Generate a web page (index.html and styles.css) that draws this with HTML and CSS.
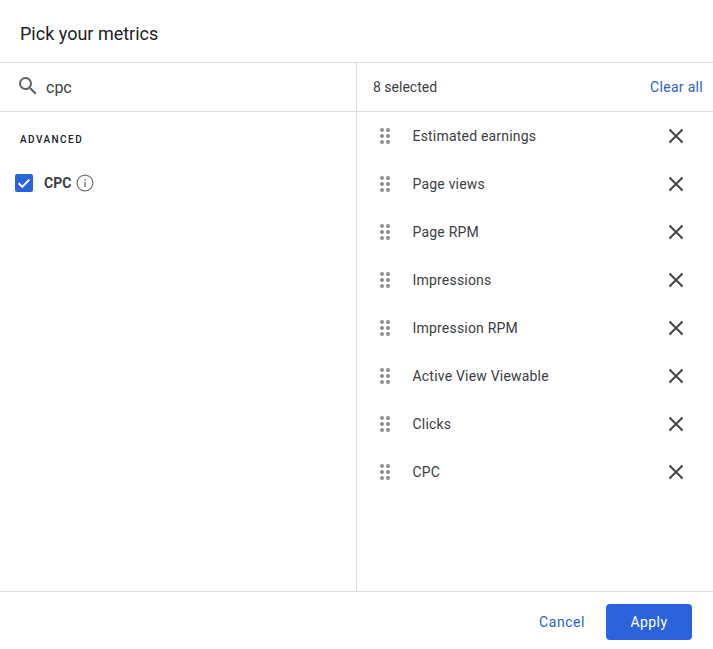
FILE: index.html
```
<!DOCTYPE html>
<html lang="en">
<head>
<meta charset="utf-8">
<title>Pick your metrics</title>
<link rel="stylesheet" href="styles.css">
</head>
<body>
<div class="dialog">
  <header class="title">Pick your metrics</header>
  <div class="columns">
    <section class="left">
      <div class="search">
        <svg class="search-icon" width="24" height="24" viewBox="0 0 24 24"><path fill="#5f6368" d="M15.5 14h-.79l-.28-.27A6.47 6.47 0 0 0 16 9.5 6.5 6.5 0 1 0 9.5 16c1.61 0 3.09-.59 4.23-1.57l.27.28v.79l5 4.99L20.49 19l-4.99-5zm-6 0C7.01 14 5 11.99 5 9.5S7.01 5 9.5 5 14 7.01 14 9.5 11.99 14 9.5 14z"/></svg>
        <span class="query">cpc</span>
      </div>
      <div class="group">ADVANCED</div>
      <div class="option">
        <svg class="check" width="18" height="18" viewBox="0 0 18 18"><rect width="18" height="18" rx="2" fill="#2b63dc"/><path d="M3.6 9.2l3.7 3.6 7-7.2" fill="none" stroke="#fff" stroke-width="1.9"/></svg>
        <span class="option-label">CPC</span>
        <svg class="info" width="18" height="18" viewBox="0 0 18 18"><circle cx="9" cy="9" r="7.9" fill="none" stroke="#757575" stroke-width="1.3"/><rect x="8.3" y="8" width="1.4" height="5" fill="#757575"/><rect x="8.3" y="5" width="1.4" height="1.6" fill="#757575"/></svg>
      </div>
    </section>
    <section class="right">
      <div class="summary"><span class="count">8 selected</span><span class="clear">Clear all</span></div>
      <ul class="list">
        <li class="row"><svg class="grip" width="10" height="16" viewBox="0 0 10 16"><use href="#dots"/></svg><span class="name">Estimated earnings</span><svg class="x" width="16" height="16" viewBox="0 0 16 16"><use href="#cross"/></svg></li>
        <li class="row"><svg class="grip" width="10" height="16" viewBox="0 0 10 16"><use href="#dots"/></svg><span class="name">Page views</span><svg class="x" width="16" height="16" viewBox="0 0 16 16"><use href="#cross"/></svg></li>
        <li class="row"><svg class="grip" width="10" height="16" viewBox="0 0 10 16"><use href="#dots"/></svg><span class="name">Page RPM</span><svg class="x" width="16" height="16" viewBox="0 0 16 16"><use href="#cross"/></svg></li>
        <li class="row"><svg class="grip" width="10" height="16" viewBox="0 0 10 16"><use href="#dots"/></svg><span class="name">Impressions</span><svg class="x" width="16" height="16" viewBox="0 0 16 16"><use href="#cross"/></svg></li>
        <li class="row"><svg class="grip" width="10" height="16" viewBox="0 0 10 16"><use href="#dots"/></svg><span class="name">Impression RPM</span><svg class="x" width="16" height="16" viewBox="0 0 16 16"><use href="#cross"/></svg></li>
        <li class="row"><svg class="grip" width="10" height="16" viewBox="0 0 10 16"><use href="#dots"/></svg><span class="name">Active View Viewable</span><svg class="x" width="16" height="16" viewBox="0 0 16 16"><use href="#cross"/></svg></li>
        <li class="row"><svg class="grip" width="10" height="16" viewBox="0 0 10 16"><use href="#dots"/></svg><span class="name">Clicks</span><svg class="x" width="16" height="16" viewBox="0 0 16 16"><use href="#cross"/></svg></li>
        <li class="row"><svg class="grip" width="10" height="16" viewBox="0 0 10 16"><use href="#dots"/></svg><span class="name">CPC</span><svg class="x" width="16" height="16" viewBox="0 0 16 16"><use href="#cross"/></svg></li>
      </ul>
    </section>
  </div>
  <footer class="footer">
    <span class="cancel">Cancel</span>
    <span class="apply">Apply</span>
  </footer>
</div>
<svg class="defs" width="0" height="0">
  <defs>
    <g id="dots" fill="#8f8f8f"><circle cx="2" cy="2" r="2"/><circle cx="8" cy="2" r="2"/><circle cx="2" cy="8" r="2"/><circle cx="8" cy="8" r="2"/><circle cx="2" cy="14" r="2"/><circle cx="8" cy="14" r="2"/></g>
    <path id="cross" d="M1.5 1.5l13 13M14.5 1.5l-13 13" fill="none" stroke="#3c3c3c" stroke-width="1.8"/>
  </defs>
</svg>
</body>
</html>
```
FILE: styles.css
```
* { box-sizing: border-box; }
html, body { margin: 0; padding: 0; background: #fff; }
body { font-family: Roboto, "Liberation Sans", sans-serif; color: #3c4043; }
.dialog { width: 713px; height: 649px; display: flex; flex-direction: column; overflow: hidden; }
.title { height: 63px; flex: none; padding: 4px 20px 0; display: flex; align-items: center; font-size: 18px; color: #202124; border-bottom: 1px solid #dadce0; }
.columns { flex: 1; display: flex; min-height: 0; }
.left { width: 357px; flex: none; border-right: 1px solid #dadce0; }
.right { flex: 1; min-width: 0; }
.search { height: 49px; display: flex; align-items: center; padding: 0 0 0 16px; border-bottom: 1px solid #dadce0; }
.search-icon { flex: none; margin-top: -2px; }
.query { margin-left: 6px; font-size: 16px; color: #3c4043; }
.group { margin: 21px 0 0 20px; font-size: 10px; font-weight: 500; letter-spacing: 1.45px; line-height: 14px; color: #202124; }
.option { display: flex; align-items: center; margin: 26px 0 0 15px; height: 20px; }
.check { flex: none; }
.option-label { margin-left: 11px; font-size: 14px; font-weight: 700; color: #3c4043; }
.info { flex: none; margin-left: 5px; margin-top: -1px; }
.summary { height: 49px; display: flex; align-items: center; justify-content: space-between; padding: 0 10px 0 16px; border-bottom: 1px solid #dadce0; font-size: 14px; }
.clear { color: #2b63c4; letter-spacing: 0.3px; }
.count { letter-spacing: 0; }
.list { list-style: none; margin: 0; padding: 0; }
.row { height: 48px; display: flex; align-items: center; padding-left: 22.5px; }
.grip { flex: none; }
.name { margin-left: 23px; flex: 1; font-size: 14px; letter-spacing: 0.2px; }
.x { flex: none; margin-right: 29px; }
.footer { height: 58px; flex: none; border-top: 1px solid #dadce0; display: flex; align-items: center; justify-content: flex-end; padding: 2px 21px 0 0; }
.cancel { color: #2b63c4; font-size: 14px; font-weight: 400; letter-spacing: 0.55px; margin-right: 21px; }
.apply { width: 86px; height: 36px; background: #2b63dc; color: #fff; font-size: 14px; font-weight: 400; letter-spacing: 0.4px; border-radius: 4px; display: flex; align-items: center; justify-content: center; }
.defs { position: absolute; }
```
